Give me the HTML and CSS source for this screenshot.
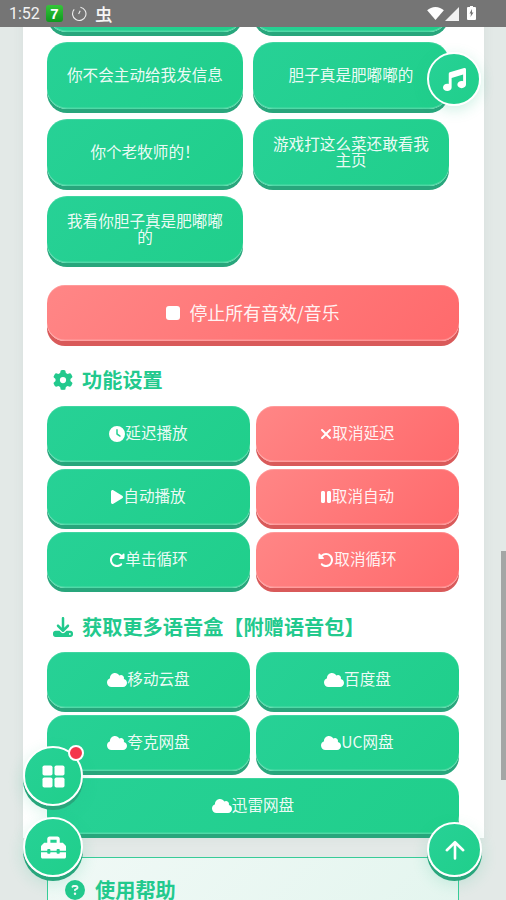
FILE: index.html
```html
<!DOCTYPE html>
<html lang="zh-CN">
<head>
<meta charset="utf-8">
<title>语音盒</title>
<link rel="stylesheet" href="styles.css">
</head>
<body>
<svg class="defs" width="0" height="0">
<defs>
<symbol id="i-music" viewBox="0 0 512 512"><path d="M499.100 6.300c8.100 6 12.900 15.600 12.900 25.700v72V368c0 44.200-43 80-96 80s-96-35.800-96-80s43-80 96-80c11.200 0 22 1.600 32 4.600V147L192 223.800V432c0 44.200-43 80-96 80s-96-35.800-96-80s43-80 96-80c11.200 0 22 1.600 32 4.600V200 128c0-14.100 9.300-26.600 22.800-30.700l320-96c9.700-2.900 20.200-1.100 28.300 4.900z"/></symbol>
<symbol id="i-cog" viewBox="0 0 512 512"><path d="M495.900 166.600c3.200 8.700 .5 18.400-6.400 24.600l-43.300 39.400c1.100 8.300 1.700 16.800 1.700 25.400s-.6 17.100-1.700 25.400l43.300 39.400c6.900 6.200 9.600 15.900 6.400 24.600c-4.400 11.900-9.700 23.300-15.800 34.300l-4.700 8.100c-6.600 11-14 21.400-22.100 31.200c-5.900 7.200-15.700 9.600-24.500 6.800l-55.700-17.700c-13.400 10.300-28.200 18.900-44 25.400l-12.500 57.100c-2 9.100-9 16.300-18.200 17.800c-13.800 2.300-28 3.500-42.500 3.500s-28.700-1.200-42.500-3.500c-9.200-1.500-16.200-8.700-18.200-17.800l-12.500-57.100c-15.800-6.500-30.600-15.100-44-25.400L83.100 425.900c-8.800 2.800-18.600 .3-24.500-6.800c-8.100-9.800-15.500-20.200-22.100-31.200l-4.700-8.100c-6.100-11-11.400-22.400-15.800-34.300c-3.200-8.700-.5-18.400 6.400-24.600l43.300-39.400C64.600 273.100 64 264.600 64 256s.6-17.100 1.700-25.400L22.400 191.200c-6.900-6.200-9.600-15.900-6.400-24.600c4.400-11.900 9.700-23.300 15.800-34.300l4.700-8.100c6.600-11 14-21.400 22.100-31.200c5.900-7.200 15.700-9.600 24.500-6.800l55.700 17.700c13.400-10.300 28.200-18.900 44-25.400l12.500-57.100c2-9.100 9-16.300 18.200-17.800C227.300 1.200 241.500 0 256 0s28.700 1.200 42.500 3.500c9.200 1.500 16.200 8.700 18.200 17.800l12.500 57.100c15.800 6.500 30.600 15.100 44 25.400l55.700-17.700c8.800-2.800 18.600-.3 24.500 6.800c8.100 9.800 15.500 20.200 22.100 31.200l4.700 8.100c6.100 11 11.400 22.400 15.800 34.300zM256 336a80 80 0 1 0 0-160 80 80 0 1 0 0 160z"/></symbol>
<symbol id="i-clock" viewBox="0 0 512 512"><path d="M256 0a256 256 0 1 1 0 512A256 256 0 1 1 256 0zM232 120V256c0 8 4 15.500 10.700 20l96 64c11 7.400 25.900 4.400 33.300-6.700s4.400-25.900-6.700-33.300L280 243.200V120c0-13.300-10.700-24-24-24s-24 10.700-24 24z"/></symbol>
<symbol id="i-times" viewBox="0 0 384 512"><path d="M342.600 150.600c12.500-12.500 12.500-32.800 0-45.300s-32.800-12.500-45.300 0L192 210.700 86.600 105.400c-12.500-12.500-32.800-12.500-45.300 0s-12.500 32.800 0 45.300L146.700 256 41.400 361.400c-12.500 12.500-12.500 32.800 0 45.300s32.800 12.500 45.300 0L192 301.300 297.400 406.600c12.500 12.500 32.800 12.500 45.300 0s12.500-32.800 0-45.300L237.300 256 342.600 150.600z"/></symbol>
<symbol id="i-play" viewBox="0 0 384 512"><path d="M73 39c-14.800-9.100-33.400-9.400-48.500-.9S0 62.600 0 80V432c0 17.400 9.400 33.400 24.500 41.900s33.700 8.100 48.500-.9L361 297c14.300-8.700 23-24.200 23-41s-8.700-32.200-23-41L73 39z"/></symbol>
<symbol id="i-pause" viewBox="0 0 320 512"><path d="M48 64C21.500 64 0 85.500 0 112V400c0 26.500 21.500 48 48 48H80c26.500 0 48-21.500 48-48V112c0-26.500-21.500-48-48-48H48zm192 0c-26.500 0-48 21.500-48 48V400c0 26.500 21.500 48 48 48h32c26.500 0 48-21.500 48-48V112c0-26.500-21.500-48-48-48H240z"/></symbol>
<symbol id="i-redo" viewBox="0 0 512 512"><path d="M463.500 224H472c13.300 0 24-10.700 24-24V72c0-9.700-5.800-18.500-14.800-22.200s-19.300-1.700-26.200 5.200L413.400 96.600c-87.600-86.500-228.700-86.200-315.800 1c-87.500 87.500-87.500 229.300 0 316.800s229.300 87.500 316.800 0c12.500-12.500 12.500-32.800 0-45.300s-32.800-12.500-45.300 0c-62.500 62.500-163.800 62.500-226.300 0s-62.500-163.800 0-226.300c62.200-62.200 162.700-62.500 225.300-1L327 183c-6.900 6.900-8.900 17.200-5.200 26.200s12.500 14.800 22.200 14.800H463.500z"/></symbol>
<symbol id="i-undo" viewBox="0 0 512 512"><path d="M48.500 224H40c-13.300 0-24-10.700-24-24V72c0-9.700 5.800-18.500 14.800-22.200s19.300-1.700 26.200 5.200L98.600 96.600c87.600-86.500 228.700-86.200 315.800 1c87.500 87.500 87.500 229.300 0 316.800s-229.300 87.500-316.800 0c-12.500-12.500-12.500-32.800 0-45.300s32.800-12.500 45.300 0c62.500 62.500 163.800 62.500 226.300 0s62.500-163.800 0-226.300c-62.200-62.200-162.700-62.500-225.300-1L185 183c6.900 6.900 8.900 17.200 5.200 26.200s-12.500 14.800-22.200 14.800H48.500z"/></symbol>
<symbol id="i-download" viewBox="0 0 512 512"><path d="M288 32c0-17.700-14.300-32-32-32s-32 14.300-32 32V274.700l-73.400-73.400c-12.500-12.500-32.800-12.500-45.300 0s-12.500 32.800 0 45.300l128 128c12.500 12.500 32.800 12.500 45.300 0l128-128c12.500-12.500 12.500-32.800 0-45.300s-32.800-12.500-45.300 0L288 274.700V32zM64 352c-35.300 0-64 28.700-64 64v32c0 35.300 28.700 64 64 64H448c35.300 0 64-28.700 64-64V416c0-35.300-28.700-64-64-64H346.500l-45.300 45.300c-25 25-65.500 25-90.500 0L165.500 352H64zm368 56a24 24 0 1 1 0 48 24 24 0 1 1 0-48z"/></symbol>
<symbol id="i-cloud" viewBox="0 0 640 512"><path d="M0 336c0 79.500 64.500 144 144 144H512c70.700 0 128-57.300 128-128c0-61.900-44-113.600-102.400-125.400c4.100-10.700 6.400-22.400 6.400-34.600c0-53-43-96-96-96c-19.700 0-38.100 6-53.300 16.200C367 64.200 315.300 32 256 32C167.600 32 96 103.600 96 192c0 2.700 .1 5.400 .2 8.100C40.200 219.800 0 273.200 0 336z"/></symbol>
<symbol id="i-help" viewBox="0 0 512 512"><path d="M256 512A256 256 0 1 0 256 0a256 256 0 1 0 0 512zM169.800 165.300c7.900-22.300 29.100-37.300 52.800-37.300h58.300c34.900 0 63.100 28.300 63.100 63.100c0 22.600-12.100 43.500-31.700 54.800L280 264.400c-.2 13-10.900 23.600-24 23.600c-13.300 0-24-10.700-24-24V250.500c0-8.600 4.600-16.500 12.100-20.800l44.300-25.400c4.700-2.700 7.600-7.700 7.600-13.100c0-8.400-6.800-15.100-15.100-15.100H222.600c-3.400 0-6.400 2.100-7.500 5.300l-.4 1.200c-4.400 12.500-18.200 19-30.600 14.600s-19-18.200-14.600-30.600l.4-1.200zM224 352a32 32 0 1 1 64 0 32 32 0 1 1 -64 0z"/></symbol>
<symbol id="i-grid" viewBox="0 0 23 23"><rect x="0.500" y="0.500" width="10" height="10" rx="1.800"/><rect x="12.500" y="0.500" width="10" height="10" rx="1.800"/><rect x="0.500" y="12.500" width="10" height="10" rx="1.800"/><rect x="12.500" y="12.500" width="10" height="10" rx="1.800"/></symbol>
<symbol id="i-toolbox" viewBox="0 0 512 512"><path d="M502.630 214.630l-45.250-45.250c-6-6-14.140-9.370-22.630-9.370H384V80c0-26.510-21.490-48-48-48H176c-26.510 0-48 21.490-48 48v80H77.250c-8.490 0-16.620 3.370-22.630 9.370L9.370 214.630c-6 6-9.370 14.140-9.370 22.630V320h128v-16c0-8.840 7.160-16 16-16h32c8.840 0 16 7.160 16 16v16h128v-16c0-8.840 7.160-16 16-16h32c8.840 0 16 7.160 16 16v16h128v-82.750c0-8.480-3.370-16.620-9.370-22.620zM320 160H192V96h128v64zm64 208c0 8.840-7.160 16-16 16h-32c-8.840 0-16-7.160-16-16v-16H192v16c0 8.840-7.160 16-16 16h-32c-8.840 0-16-7.160-16-16v-16H0v96c0 17.670 14.330 32 32 32h448c17.670 0 32-14.330 32-32v-96H384v16z"/></symbol>
</defs>
</svg>

<header class="status">
  <span class="time">1:52</span>
  <span class="app-seven">7</span>
  <svg class="st-sync" viewBox="0 0 16 16"><path d="M9.400 1.200A6.700 6.700 0 1 1 3.200 3.400"/><path d="M9.200 4.800 7.600 7.900"/></svg>
  <span class="st-bug">虫</span>
  <span class="st-spacer"></span>
  <svg class="st-wifi" viewBox="0 0 18 14"><path d="M0 3.600C2.400 1.400 5.500 0 9 0s6.600 1.400 9 3.600L9 14z"/></svg>
  <svg class="st-signal" viewBox="0 0 14 14"><path d="M14 0v14H0z"/></svg>
  <svg class="st-batt" viewBox="0 0 9 14"><path fill-rule="evenodd" d="M3 0h3v1h2a1 1 0 0 1 1 1v11a1 1 0 0 1-1 1H1a1 1 0 0 1-1-1V2a1 1 0 0 1 1-1h2zM5 3 2.500 7.500H4L3.500 11 6.500 6.500H5z"/></svg>
</header>

<main class="card">
  <section class="sound-grid">
    <button class="btn green"></button>
    <button class="btn green"></button>
    <button class="btn green">你不会主动给我发信息</button>
    <button class="btn green">胆子真是肥嘟嘟的</button>
    <button class="btn green">你个老牧师的！</button>
    <button class="btn green">游戏打这么菜还敢看我主页</button>
    <button class="btn green">我看你胆子真是肥嘟嘟的</button>
  </section>

  <button class="btn red stop"><span class="stop-square"></span>停止所有音效/音乐</button>

  <h2 class="title first"><svg class="title-icon"><use href="#i-cog"/></svg>功能设置</h2>
  <section class="action-grid">
    <button class="btn green"><svg class="ic"><use href="#i-clock"/></svg>延迟播放</button>
    <button class="btn red"><svg class="ic ic-x"><use href="#i-times"/></svg>取消延迟</button>
    <button class="btn green"><svg class="ic ic-play"><use href="#i-play"/></svg>自动播放</button>
    <button class="btn red"><svg class="ic ic-pause"><use href="#i-pause"/></svg>取消自动</button>
    <button class="btn green"><svg class="ic"><use href="#i-redo"/></svg>单击循环</button>
    <button class="btn red"><svg class="ic"><use href="#i-undo"/></svg>取消循环</button>
  </section>

  <h2 class="title"><svg class="title-icon"><use href="#i-download"/></svg>获取更多语音盒【附赠语音包】</h2>
  <section class="action-grid">
    <button class="btn green"><svg class="ic ic-cloud"><use href="#i-cloud"/></svg>移动云盘</button>
    <button class="btn green"><svg class="ic ic-cloud"><use href="#i-cloud"/></svg>百度盘</button>
    <button class="btn green"><svg class="ic ic-cloud"><use href="#i-cloud"/></svg>夸克网盘</button>
    <button class="btn green"><svg class="ic ic-cloud"><use href="#i-cloud"/></svg>UC网盘</button>
    <button class="btn green wide"><svg class="ic ic-cloud"><use href="#i-cloud"/></svg>迅雷网盘</button>
  </section>

  <section class="help">
    <h2 class="help-title"><svg class="help-icon"><use href="#i-help"/></svg>使用帮助</h2>
  </section>
</main>

<button class="fab fab-music"><svg class="fab-ic"><use href="#i-music"/></svg></button>
<button class="fab fab-grid edged"><svg class="fab-ic small"><use href="#i-grid"/></svg><span class="dot"></span></button>
<button class="fab fab-tools edged"><svg class="fab-ic tool"><use href="#i-toolbox"/></svg></button>
<button class="fab fab-up edged"><svg class="fab-arrow" viewBox="0 0 24 24"><path d="M12 20.500V4.500M3.800 12.200 12 4.200l8.200 8"/></svg></button>
<div class="scrollbar"></div>
</body>
</html>
```

FILE: styles.css
```css
* { box-sizing: border-box; }
html, body { margin: 0; height: 900px; overflow: hidden; }
body {
  position: relative;
  width: 506px;
  background: #e3e9e7;
  font-family: "Noto Sans CJK SC", "Noto Sans", sans-serif;
  color: #fff;
}
.defs { position: absolute; }

.status {
  position: relative;
  z-index: 5;
  height: 27px;
  background: #757575;
  display: flex;
  align-items: center;
  padding: 0 30px 0 9px;
}
.time { font: 400 16px/27px Roboto, sans-serif; color: #f2f2f2; width: 37px; }
.app-seven {
  width: 17px; height: 17px; border-radius: 3px;
  margin-top: -1px;
  background: linear-gradient(#35c53a, #0e9a1f);
  font: 900 15px/17px "Liberation Sans", sans-serif;
  text-align: center; color: #fff;
}
.st-sync { width: 16px; height: 16px; margin-left: 8px; fill: none; stroke: #eee; stroke-width: 1.100; }
.st-bug { font: 500 17.5px/27px "Noto Sans CJK SC", sans-serif; margin-left: 8px; color: #f6f6f6; }
.st-spacer { flex: 1; }
.st-wifi { width: 17px; height: 13px; fill: #fff; margin-top: -1px; }
.st-signal { width: 14px; height: 14px; fill: #f2f2f2; margin-left: 1px; }
.st-batt { width: 9px; height: 14px; fill: #fff; margin-left: 8px; margin-top: -2px; }

.card {
  position: relative;
  margin-left: 23px;
  width: 461px;
  height: 873px;
  background: #fff;
  padding: 0 25px 0 24px;
  box-shadow: 0 0 12px rgba(60, 110, 95, 0.06);
}

.btn {
  border: 0;
  margin: 0;
  padding: 0 15px 4px;
  border-radius: 18px;
  color: rgba(255, 255, 255, 0.93);
  font: 400 15.6px/16px "Noto Sans CJK SC", "Noto Sans", sans-serif;
  display: flex;
  align-items: center;
  justify-content: center;
  text-align: center;
  height: 56px;
}
.green {
  background: linear-gradient(135deg, #27d196, #20cf8b);
  box-shadow: 0 4px 0 #28a67c, inset 0 -1.500px 0 rgba(255, 255, 255, 0.2), inset 0 1px 0 rgba(255, 255, 255, 0.12);
}
.red {
  background: linear-gradient(135deg, #ff8686, #ff6a6c);
  box-shadow: 0 4px 0 #d95a5a, inset 0 -1.500px 0 rgba(255, 255, 255, 0.25), inset 0 1px 0 rgba(255, 255, 255, 0.18);
}

.sound-grid {
  display: grid;
  grid-template-columns: 196px 196px;
  gap: 10px;
  margin-top: -62px;
}
.sound-grid .btn { height: 67px; border-radius: 20px; }

.stop {
  width: 412px;
  margin-top: 22px;
  font-size: 17.9px;
  padding-bottom: 3px;
  box-shadow: 0 5px 0 #d95a5a, inset 0 -1.500px 0 rgba(255, 255, 255, 0.25), inset 0 1px 0 rgba(255, 255, 255, 0.18);
}
.stop-square {
  width: 14px; height: 14px; border-radius: 3px;
  background: #fff;
  margin: 3px 9px 0 0;
}

.title {
  display: flex;
  align-items: center;
  height: 28px;
  margin: 25px 0 11px;
  padding-left: 6px;
  color: #22c98d;
  font: 700 20.2px/28px "Noto Sans CJK SC", sans-serif;
  white-space: nowrap;
}
.title.first { margin-bottom: 12px; }
.title-icon { width: 20px; height: 20px; fill: #22c98d; margin-right: 9px; flex: none; }

.action-grid {
  display: grid;
  grid-template-columns: 203px 203px;
  gap: 7px 6px;
}
.wide { grid-column: 1 / 3; }

.ic { width: 16px; height: 16px; fill: #fff; flex: none; margin-top: 4px; }
.ic-x { width: 12px; }
.ic-play { width: 12px; }
.ic-pause { width: 10px; margin-right: 1px; }
.ic-cloud { width: 20px; }

.help {
  margin-top: 23px;
  height: 80px;
  border: 1px solid #37cc98;
  border-radius: 2px 2px 0 0;
  background: linear-gradient(135deg, #f0f9f6, #e3f5ee);
  padding: 19px 0 0 17px;
}
.help-title {
  display: flex;
  align-items: center;
  margin: 0;
  color: #22c98d;
  font: 700 20.2px/26px "Noto Sans CJK SC", sans-serif;
}
.help-icon { width: 20px; height: 20px; fill: #22c98d; margin-right: 10px; }

.fab {
  position: absolute;
  z-index: 3;
  border: 2px solid #fff;
  border-radius: 50%;
  padding: 0;
  background: linear-gradient(135deg, #27d196, #20cf8b);
  display: flex;
  align-items: center;
  justify-content: center;
  box-shadow: 0 4px 14px rgba(35, 190, 135, 0.22);
}
.edged { box-shadow: 0 4px 0 #28a67c, 0 6px 16px rgba(35, 190, 135, 0.2); }
.fab-music { left: 427px; top: 52px; width: 54px; height: 54px; }
.fab-grid { left: 23px; top: 746px; width: 60px; height: 60px; }
.fab-tools { left: 23px; top: 817px; width: 60px; height: 60px; }
.fab-up { left: 427px; top: 822px; width: 55px; height: 55px; }
.fab-ic { width: 23px; height: 23px; fill: #fff; }
.fab-ic.tool { width: 25px; height: 25px; }
.fab-arrow { width: 24px; height: 24px; fill: none; stroke: #fff; stroke-width: 2.600; stroke-linecap: round; stroke-linejoin: round; }
.dot {
  position: absolute;
  right: -3px; top: -3px;
  width: 16px; height: 16px;
  border-radius: 50%;
  background: #f4364c;
  border: 2px solid #fff;
}

.scrollbar {
  position: absolute;
  z-index: 4;
  left: 501px; top: 551px;
  width: 5px; height: 229px;
  background: #a3a6a5;
}
```
